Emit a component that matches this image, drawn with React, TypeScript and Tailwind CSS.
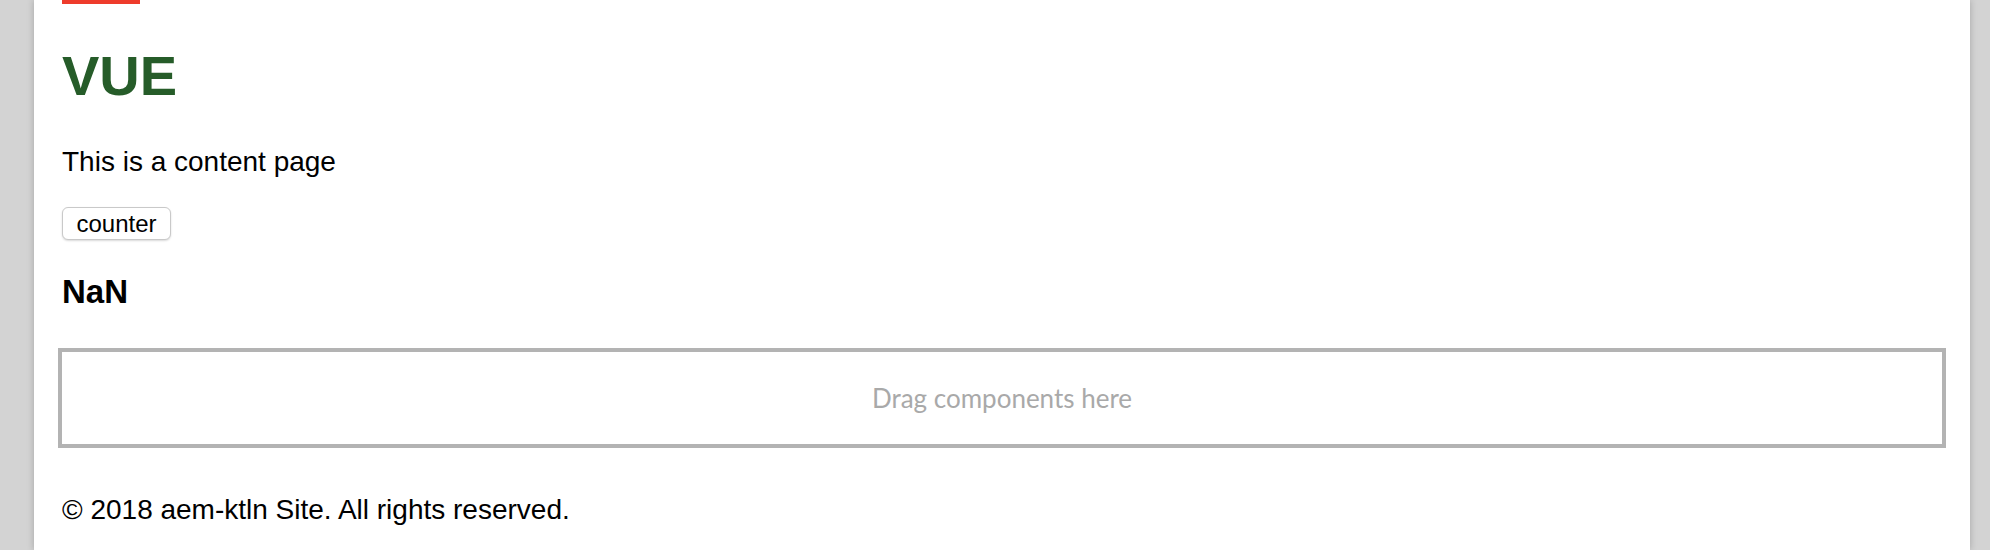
import React, { useState } from 'react';

const App: React.FC = () => {
  const [count, setCount] = useState<number>(NaN);

  return (
    <div className="flex h-[550px] w-full overflow-hidden bg-[#d3d3d3] font-['Liberation_Sans',Arial,sans-serif] text-black">
      <div className="w-[34px] shrink-0" />

      {/* Page */}
      <div className="flex-1 bg-white px-[28px] shadow-[0_0_7px_rgba(0,0,0,0.22)]">
        <div className="h-[4px] w-[78px] bg-[#ee3b2b]" />

        <h1 className="mt-[40px] text-[56px] font-bold leading-[64px] text-[#265c29]">VUE</h1>

        <p className="mt-[38px] text-[28px] leading-[32px]">This is a content page</p>

        <button
          onClick={() => setCount(count + 1)}
          className="mt-[29px] flex h-[33px] w-[109px] items-center justify-center rounded-[6px] border border-[#c9c9c9] bg-white text-[24px] leading-none shadow-[0_1px_2px_rgba(0,0,0,0.15)]"
        >
          counter
        </button>

        <h3 className="mt-[33px] text-[33px] font-bold leading-[38px]">{String(count)}</h3>

        {/* Drop zone */}
        <div className="-mx-[4px] mt-[37px] flex h-[100px] items-center justify-center border-4 border-[#b3b3b3] font-['Lato',sans-serif] text-[26px] text-[#a9a9a9]">
          Drag components here
        </div>

        <footer className="mt-[46px] text-[28px] leading-[32px]">© 2018 aem-ktln Site. All rights reserved.</footer>
      </div>

      <div className="w-[20px] shrink-0" />
    </div>
  );
};

export default App;
